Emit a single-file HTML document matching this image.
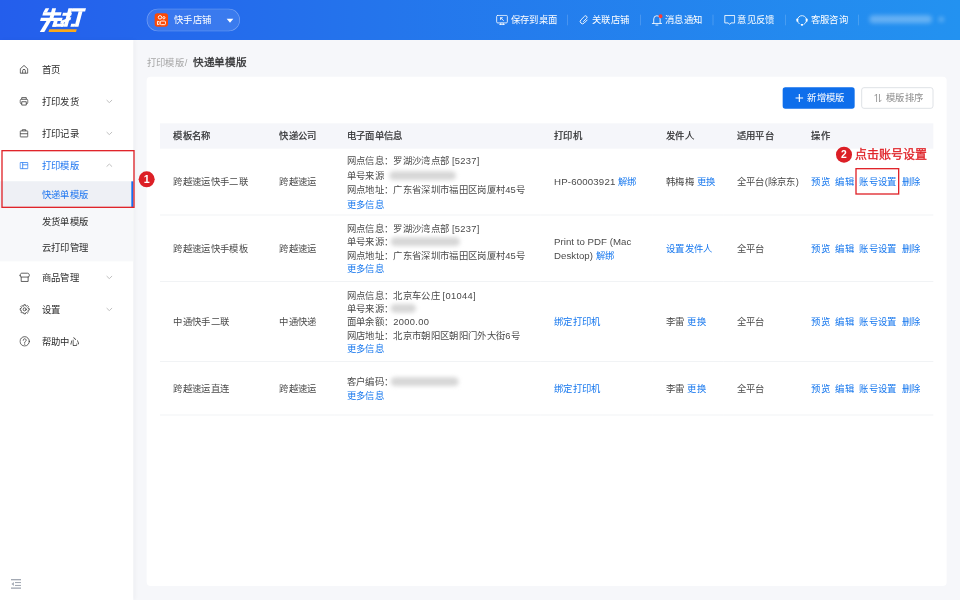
<!DOCTYPE html>
<html lang="zh-CN">
<head>
<meta charset="utf-8">
<title>快递单模版</title>
<style>
*{box-sizing:border-box}
html,body{margin:0;padding:0;width:960px;height:600px;overflow:hidden;background:#f6f7fa}
body{font-family:"Liberation Sans",sans-serif}
#app{position:absolute;left:0;top:0;width:1440px;height:900px;transform:scale(.6666667);transform-origin:0 0;font-family:"Liberation Sans",sans-serif;font-size:14px;line-height:20px;color:#4a4a4a;background:#f6f7fa;overflow:hidden}
a{color:#1677ee;text-decoration:none}
svg{display:block}

/* ---------- header ---------- */
#hd{position:absolute;left:0;top:0;width:1440px;height:60px;background:linear-gradient(90deg,#245eec 0%,#2475ec 40%,#2392f0 100%);color:#fff}
#logo{position:absolute;left:54px;top:6px;width:84px;height:48px}
#shop{position:absolute;left:220px;top:13px;width:140px;height:34px;border-radius:17px;background:rgba(255,255,255,.1);border:1px solid rgba(255,255,255,.32)}
#shop .ks{position:absolute;left:11px;top:6px;width:20px;height:20px;border-radius:4px;background:#fd4906}
#shop .nm{position:absolute;left:40px;top:0;line-height:32px;font-size:14px;color:#fff;white-space:nowrap}
#shop .tri{position:absolute;left:118.500px;top:13.500px;width:0;height:0;border-left:5px solid transparent;border-right:5px solid transparent;border-top:6px solid #fff}
.nav{position:absolute;top:0;height:60px;line-height:60px;font-size:14px;color:#fff;white-space:nowrap}
.nav svg{position:absolute;top:22px}
.sep{position:absolute;top:22px;width:1px;height:16px;background:rgba(255,255,255,.25)}
.blur{position:absolute;border-radius:6px;filter:blur(3px)}

/* ---------- sidebar ---------- */
#sd{position:absolute;left:0;top:60px;width:200px;height:840px;background:#fff;box-shadow:2px 0 6px rgba(0,21,41,.04)}
.mi{position:absolute;left:0;width:200px;height:40px;line-height:40px;color:#2b2b2b;font-size:14px;white-space:nowrap}
.mi .ic{position:absolute;left:29px;top:13px;width:14px;height:14px}
.mi .ic.big{left:28.5px;top:12px;width:16px;height:16px}
.mi .tx{position:absolute;left:62.5px;top:0}
.mi .ar{position:absolute;left:159px;top:17px;width:10px;height:6px}
.mi.on{color:#1f76f0}
#sub{position:absolute;left:0;top:212px;width:200px;height:120px;background:#f7f8fa}
.si{position:absolute;left:0;width:200px;height:40px;line-height:40px;padding-left:62.5px;color:#2b2b2b;font-size:14px;white-space:nowrap}
.si.on{background:#eef0f5;color:#1f76f0;border-right:3px solid #166fef}

/* ---------- content ---------- */
#bc{position:absolute;left:220px;top:82px;height:24px;line-height:24px;white-space:nowrap}
#bc .a{font-size:14px;color:#a6a6a6}
#bc .a i{font-style:normal;margin-left:1.2px}
#bc .b{font-size:16px;color:#303133;font-weight:normal;-webkit-text-stroke:.4px #303133;margin-left:8.300px}
#card{position:absolute;left:220px;top:115px;width:1200px;height:764px;background:#fff;border-radius:6px}
.btn{position:absolute;top:15.5px;height:32px;line-height:32px;border-radius:4px;font-size:14px;white-space:nowrap}
#b1{left:954px;width:108px;background:#0e6eeb;color:#fff}
#b2{left:1072px;width:108px;background:#fff;border:1px solid #cfd3d9;color:#8c8c8c;line-height:30px}

.btn svg{position:absolute}
/* ---------- table ---------- */
#tb{position:absolute;left:20px;top:69.5px;width:1160px;border-collapse:collapse;table-layout:fixed;font-size:14px;line-height:20px;color:#4a4a4a}
#thbg{position:absolute;left:20px;top:69.5px;width:1160px;height:38px;background:#f5f6fa}
#tb th{height:38px;padding:0 0 0 20px;color:#303133;font-weight:normal;-webkit-text-stroke:.35px #303133;text-align:left;white-space:nowrap}
#tb td{padding:0 0 0 20px;vertical-align:middle;border-bottom:1px solid #ebedf0;white-space:nowrap}
#tb td a{margin-right:8px}
#tb td a.n{margin-right:0}
#tb td div{height:20px;margin-left:-2px}
#tb tr.r1 td div{height:22px;line-height:22px;position:relative;top:1px}
#tb tr.r1 td{padding-top:1px}
.bl{display:inline-block;vertical-align:middle;height:13px;border-radius:7px;background:#d6d6d6;filter:blur(3.5px);margin-left:-4px;position:relative;top:-1px}
.en{font-size:14.500px;letter-spacing:.25px}
.nu{letter-spacing:.45px}
/* ---------- annotations ---------- */
.rb{position:absolute;border:2px solid #e0242a}
.rc{position:absolute;border-radius:50%;background:#dc1f26;color:#fff;font-weight:bold;text-align:center}
#tip{position:absolute;left:1283px;top:221px;height:25px;line-height:25px;font-size:18px;color:#e0242a;white-space:nowrap;-webkit-text-stroke:.5px #e0242a}
.j{display:inline-block;white-space:nowrap;text-align:justify;text-align-last:justify}
.w1{width:1em}.w2{width:2em}.w3{width:3em}.w4{width:4em}.w5{width:5em}.w6{width:6em}.w8{width:8em}.w10{width:10em}.w11{width:11em}.w17{width:17em}
</style>
</head>
<body>
<div id="app">

<!-- header -->
<div id="hd">
  <div id="logo">
    <svg width="84" height="48" viewBox="36 4 56 32">
      <g fill="#fff" transform="translate(7.18 0) skewX(-15)">
        <path d="M40.600 8.300h3.700l-1.200 4.300h-3.700z"/>
        <rect x="39.300" y="12.300" width="18.400" height="3.100"/>
        <rect x="47.200" y="8.200" width="3.900" height="10.300"/>
        <rect x="38.500" y="17.800" width="21.700" height="3.100"/>
        <path d="M45 20.800h4.300l-3.600 11.200h-4.500z"/>
        <rect x="52.200" y="20.800" width="3.900" height="6"/>
        <rect x="52.200" y="23.800" width="10.600" height="3"/>
        <rect x="60.600" y="21.800" width="2.200" height="2.200"/>
        <rect x="59.200" y="12.700" width="9" height="3.100"/>
        <rect x="63.500" y="8.200" width="3.900" height="18.600"/>
        <path d="M60.200 23.800h3.400v3h-2.600z"/>
        <path d="M59.300 20.800l9.400-3.700v3l-9.400 3.700z"/>
        <rect x="67.300" y="8.200" width="13.700" height="3.200"/>
        <rect x="74.500" y="11.300" width="3.900" height="15.500"/>
        <rect x="70.400" y="23.800" width="4.200" height="3"/>
      </g>
      <path d="M49.300 29.200h27.500l-.8 2.800H48.500z" fill="#fba919"/>
    </svg>
  </div>
  <div id="shop"><div class="ks"><svg width="20" height="20" viewBox="0 0 20 20" fill="none" stroke="#fff" stroke-width="1.400"><circle cx="8" cy="6" r="2.600"/><circle cx="13.800" cy="6.600" r="1.700"/><rect x="8.400" y="11.600" width="7.800" height="5.400" rx="1.500"/><path d="M7.800 13.200 4.200 12v5l3.600-1.200"/></svg></div><span class="nm"><span class="j w4">快手店铺</span></span><div class="tri"></div></div>

  <div class="nav" style="left:744px"><svg style="left:0" width="18" height="16" viewBox="0 0 18 16" fill="none" stroke="#fff" stroke-width="1.250" stroke-linecap="round" stroke-linejoin="round"><rect x="1" y="1" width="16" height="11.400" rx="1.600"/><path d="M5.600 14.900h6.800M7.400 12.600l-.8 2.200M10.600 12.600l.8 2.200M6.800 7.200V4.600h2.800M7 4.800l4.200 4"/></svg><span style="margin-left:22px"><span class="j w5">保存到桌面</span></span></div>
  <div class="sep" style="left:851px"></div>
  <div class="nav" style="left:868px"><svg style="left:0" width="16" height="16" viewBox="0 0 16 16" fill="none" stroke="#fff" stroke-width="1.3" stroke-linecap="round"><g transform="rotate(45 8 8)"><path d="M11.400 4.600v6.500a3.400 3.400 0 0 1-6.800 0V3.500a2.200 2.200 0 0 1 4.400 0v6.800"/></g></svg><span style="margin-left:20px"><span class="j w4">关联店铺</span></span></div>
  <div class="sep" style="left:960px"></div>
  <div class="nav" style="left:977px"><svg style="left:0;top:21px" width="17" height="18" viewBox="0 0 17 18" fill="none" stroke="#fff" stroke-width="1.3" stroke-linecap="round"><path d="M1.400 14.200h14M3.600 14V7.400a4.800 4.800 0 0 1 9.600 0V14M6.900 16.600h3"/><circle cx="14" cy="3.400" r="3" fill="#f93a35" stroke="none"/></svg><span style="margin-left:20.5px"><span class="j w4">消息通知</span></span></div>
  <div class="sep" style="left:1069px"></div>
  <div class="nav" style="left:1085px"><svg style="left:.5px" width="17" height="16" viewBox="0 0 17 16" fill="none" stroke="#fff" stroke-width="1.3" stroke-linejoin="round"><path d="M1.200 1.200h14.800v11.200H10.400l-2 2.200-2-2.200H1.200z"/></svg><span style="margin-left:21px"><span class="j w4">意见反馈</span></span></div>
  <div class="sep" style="left:1178px"></div>
  <div class="nav" style="left:1194px"><svg style="left:0;top:20.5px" width="18" height="19" viewBox="0 0 18 19" fill="none" stroke="#fff" stroke-width="1.250" stroke-linecap="round"><path d="M4.800 14.600A6.800 6.800 0 1 1 12.200 15.300"/><rect x=".6" y="6.800" width="2.700" height="5" rx="1.200" fill="#fff" stroke="none"/><rect x="14.700" y="6.800" width="2.700" height="5" rx="1.200" fill="#fff" stroke="none"/><rect x="7" y="15" width="4" height="2.500" rx="1.200" fill="#fff" stroke="none"/></svg><span style="margin-left:22px"><span class="j w4">客服咨询</span></span></div>
  <div class="sep" style="left:1287px"></div>
  <div class="blur" style="left:1304px;top:23px;width:94px;height:12px;background:rgba(255,255,255,.3)"></div>
  <div class="blur" style="left:1408px;top:25px;width:8px;height:8px;background:rgba(255,255,255,.3)"></div>
</div>

<!-- sidebar -->
<div id="sd">
  <div class="mi" style="top:24px"><svg class="ic" viewBox="0 0 14 14" fill="none" stroke="#333" stroke-width="1.150" stroke-linejoin="round"><path d="M1.400 6.200 7 1.200l5.600 5v6.600H1.400z"/><path d="M5 12.800V9a2 2 0 0 1 4 0v3.800"/></svg><span class="tx"><span class="j w2">首页</span></span></div>
  <div class="mi" style="top:72px"><svg class="ic" viewBox="0 0 14 14" fill="none" stroke="#333" stroke-width="1.150" stroke-linejoin="round"><path d="M3.600 4V1.400h6.800V4"/><rect x="1.200" y="4" width="11.600" height="6.400" rx="1.800"/><path d="M3.600 7.600h6.800v5H3.600z" fill="#fff"/></svg><span class="tx"><span class="j w4">打印发货</span></span><svg class="ar" viewBox="0 0 10 6" fill="none" stroke="#a9a9a9" stroke-width="1.1"><path d="M.8.9 5 5l4.2-4.100"/></svg></div>
  <div class="mi" style="top:120px"><svg class="ic" viewBox="0 0 14 14" fill="none" stroke="#333" stroke-width="1.150" stroke-linejoin="round"><path d="M4.400 3.400V1.600h5.200v1.800"/><rect x="1.300" y="3.400" width="11.400" height="9" rx=".8"/><path d="M1.300 7.600h11.400"/></svg><span class="tx"><span class="j w4">打印记录</span></span><svg class="ar" viewBox="0 0 10 6" fill="none" stroke="#a9a9a9" stroke-width="1.1"><path d="M.8.9 5 5l4.2-4.100"/></svg></div>
  <div class="mi on" style="top:168px"><svg class="ic" viewBox="0 0 14 14" fill="none" stroke="#1f76f0" stroke-width="1.150" stroke-linejoin="round"><rect x="1.200" y="2.800" width="11.600" height="9.200" rx=".4"/><path d="M5 2.800v9.200M5 6.200h7.800"/></svg><span class="tx"><span class="j w4">打印模版</span></span><svg class="ar" viewBox="0 0 10 6" fill="none" stroke="#a9a9a9" stroke-width="1.1"><path d="M.8 5.100 5 1l4.200 4.100"/></svg></div>
  <div id="sub">
    <div class="si on" style="top:0"><span class="j w5">快递单模版</span></div>
    <div class="si" style="top:40px"><span class="j w5">发货单模版</span></div>
    <div class="si" style="top:80px"><span class="j w5">云打印管理</span></div>
  </div>
  <div class="mi" style="top:336px"><svg class="ic big" viewBox="0 0 16 16" fill="none" stroke="#333" stroke-width="1.150" stroke-linejoin="round" stroke-linecap="round"><path d="M1 5.400C1 3.200 2 1.800 3.800 1.800h8.400C14 1.800 15 3.200 15 5.400c0 1.200-.8 2.200-2 2.200H3c-1.200 0-2-1-2-2.200z"/><path d="M2.800 7.600v6.600h10.400V7.600"/></svg><span class="tx"><span class="j w4">商品管理</span></span><svg class="ar" viewBox="0 0 10 6" fill="none" stroke="#a9a9a9" stroke-width="1.1"><path d="M.8.9 5 5l4.2-4.100"/></svg></div>
  <div class="mi" style="top:384px"><svg class="ic big" viewBox="0 0 16 16" fill="none" stroke="#333" stroke-width="1.150" stroke-linejoin="round" stroke-linecap="round"><path d="M6.64 2.67L6.88 1.09L9.12 1.09L9.36 2.67L10.81 3.27L12.10 2.32L13.68 3.90L12.73 5.19L13.33 6.64L14.91 6.88L14.91 9.12L13.33 9.36L12.73 10.81L13.68 12.10L12.10 13.68L10.81 12.73L9.36 13.33L9.12 14.91L6.88 14.91L6.64 13.33L5.19 12.73L3.90 13.68L2.32 12.10L3.27 10.81L2.67 9.36L1.09 9.12L1.09 6.88L2.67 6.64L3.27 5.19L2.32 3.90L3.90 2.32L5.19 3.27z"/><circle cx="8" cy="8" r="2.300"/></svg><span class="tx"><span class="j w2">设置</span></span><svg class="ar" viewBox="0 0 10 6" fill="none" stroke="#a9a9a9" stroke-width="1.1"><path d="M.8.9 5 5l4.2-4.100"/></svg></div>
  <div class="mi" style="top:432px"><svg class="ic big" viewBox="0 0 16 16" fill="none" stroke="#333" stroke-width="1.150" stroke-linejoin="round" stroke-linecap="round"><circle cx="8" cy="8" r="7"/><path d="M5.800 6.400a2.200 2.200 0 1 1 3.300 1.900c-.7.400-1.100.9-1.100 1.600v.4M8 12v.6"/></svg><span class="tx"><span class="j w4">帮助中心</span></span></div>
  <svg style="position:absolute;left:16px;top:808px" width="16" height="16" viewBox="0 0 16 16" fill="#a3a9b3"><rect x=".5" y=".5" width="15" height="2"/><rect x=".5" y="13.200" width="15" height="2"/><rect x="6.500" y="5" width="9" height="1.600"/><rect x="6.500" y="9.400" width="9" height="1.600"/><path d="M1.200 8l3.600-3v6z"/></svg>
</div>

<!-- content -->
<div id="bc"><span class="a"><span class="j w4">打印模版</span><i>/</i></span><span class="b"><span class="j w5">快递单模版</span></span></div>
<div id="card">
  <div class="btn" id="b1"><svg style="left:19px;top:10px" width="12" height="12" viewBox="0 0 12 12" stroke="#fff" stroke-width="1.700"><path d="M6 0v12M0 6h12"/></svg><span style="margin-left:37px"><span class="j w4">新增模版</span></span></div>
  <div class="btn" id="b2"><svg style="left:18px;top:8px" width="12" height="14" viewBox="0 0 12 14" fill="none" stroke="#8c8c8c" stroke-width="1.200"><path d="M3.800 13V1L.8 4.200M8.200 1v12l3-3.200"/></svg><span style="margin-left:36px"><span class="j w4">模版排序</span></span></div>
  <div id="thbg"></div>
  <table id="tb">
    <colgroup><col style="width:159px"><col style="width:103px"><col style="width:309px"><col style="width:168px"><col style="width:106px"><col style="width:112px"><col style="width:203px"></colgroup>
    <thead><tr><th><span class="j w4">模板名称</span></th><th><span class="j w4">快递公司</span></th><th style="padding-left:18px"><span class="j w6">电子面单信息</span></th><th><span class="j w3">打印机</span></th><th><span class="j w3">发件人</span></th><th><span class="j w4">适用平台</span></th><th><span class="j w2">操作</span></th></tr></thead>
    <tbody>
    <tr class="r1" style="height:100px">
      <td><span class="j w8">跨越速运快手二联</span></td><td><span class="j w4">跨越速运</span></td>
      <td><div><span class="j w11">网点信息：罗湖沙湾点部</span> <span class="nu">[5237]</span></div><div><span class="j w4">单号来源</span> <span class="bl" style="width:100px;margin-left:4px"></span></div><div><span class="j w17">网点地址：广东省深圳市福田区岗厦村</span>45<span class="j w1">号</span></div><div><a href="#"><span class="j w4">更多信息</span></a></div></td>
      <td><span class="en">HP-60003921</span> <a href="#"><span class="j w2">解绑</span></a></td>
      <td><span class="j w3">韩梅梅</span> <a href="#"><span class="j w2">更换</span></a></td><td><span class="j w3">全平台</span>(<span class="j w3">除京东</span>)</td>
      <td><a href="#"><span class="j w2">预览</span></a><a href="#"><span class="j w2">编辑</span></a><a href="#"><span class="j w4">账号设置</span></a><a href="#" class="n"><span class="j w2">删除</span></a></td>
    </tr>
    <tr style="height:100px">
      <td><span class="j w8">跨越速运快手模板</span></td><td><span class="j w4">跨越速运</span></td>
      <td><div><span class="j w11">网点信息：罗湖沙湾点部</span> <span class="nu">[5237]</span></div><div><span class="j w5">单号来源：</span><span class="bl" style="width:104px"></span></div><div><span class="j w17">网点地址：广东省深圳市福田区岗厦村</span>45<span class="j w1">号</span></div><div><a href="#"><span class="j w4">更多信息</span></a></div></td>
      <td><span class="en" style="letter-spacing:.05px">Print to PDF (Mac<br>Desktop)</span> <a href="#"><span class="j w2">解绑</span></a></td>
      <td><a href="#"><span class="j w5">设置发件人</span></a></td><td><span class="j w3">全平台</span></td>
      <td><a href="#"><span class="j w2">预览</span></a><a href="#"><span class="j w2">编辑</span></a><a href="#"><span class="j w4">账号设置</span></a><a href="#" class="n"><span class="j w2">删除</span></a></td>
    </tr>
    <tr style="height:120px">
      <td><span class="j w6">中通快手二联</span></td><td><span class="j w4">中通快递</span></td>
      <td><div><span class="j w10">网点信息：北京车公庄</span> <span class="nu">[01044]</span></div><div><span class="j w5">单号来源：</span><span class="bl" style="width:38px"></span></div><div><span class="j w5">面单余额：</span><span class="nu">2000.00</span></div><div><span class="j w17">网店地址：北京市朝阳区朝阳门外大街</span>6<span class="j w1">号</span></div><div><a href="#"><span class="j w4">更多信息</span></a></div></td>
      <td><a href="#"><span class="j w5">绑定打印机</span></a></td>
      <td><span class="j w2">李雷</span> <a href="#"><span class="j w2">更换</span></a></td><td><span class="j w3">全平台</span></td>
      <td><a href="#"><span class="j w2">预览</span></a><a href="#"><span class="j w2">编辑</span></a><a href="#"><span class="j w4">账号设置</span></a><a href="#" class="n"><span class="j w2">删除</span></a></td>
    </tr>
    <tr style="height:80px">
      <td><span class="j w6">跨越速运直连</span></td><td><span class="j w4">跨越速运</span></td>
      <td><div><span class="j w5">客户编码：</span><span class="bl" style="width:102px"></span></div><div><a href="#"><span class="j w4">更多信息</span></a></div></td>
      <td><a href="#"><span class="j w5">绑定打印机</span></a></td>
      <td><span class="j w2">李雷</span> <a href="#"><span class="j w2">更换</span></a></td><td><span class="j w3">全平台</span></td>
      <td><a href="#"><span class="j w2">预览</span></a><a href="#"><span class="j w2">编辑</span></a><a href="#"><span class="j w4">账号设置</span></a><a href="#" class="n"><span class="j w2">删除</span></a></td>
    </tr>
    </tbody>
  </table>
</div>

<!-- annotations -->
<div class="rb" style="left:2px;top:225px;width:200px;height:87px"></div>
<div class="rc" style="left:208.200px;top:256.700px;width:24px;height:24px;line-height:24px;font-size:16px">1</div>
<div class="rb" style="left:1282.500px;top:252.400px;width:66.500px;height:39.500px"></div>
<div class="rc" style="left:1254px;top:220.300px;width:23.600px;height:23.600px;line-height:23.600px;font-size:15.500px">2</div>
<div id="tip"><span class="j w6">点击账号设置</span></div>

</div>
</body>
</html>
